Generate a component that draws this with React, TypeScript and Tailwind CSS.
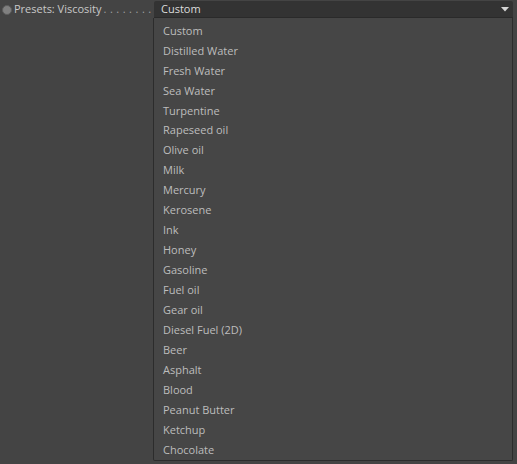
import React from 'react';

const items = [
  'Custom',
  'Distilled Water',
  'Fresh Water',
  'Sea Water',
  'Turpentine',
  'Rapeseed oil',
  'Olive oil',
  'Milk',
  'Mercury',
  'Kerosene',
  'Ink',
  'Honey',
  'Gasoline',
  'Fuel oil',
  'Gear oil',
  'Diesel Fuel (2D)',
  'Beer',
  'Asphalt',
  'Blood',
  'Peanut Butter',
  'Ketchup',
  'Chocolate',
];

const App: React.FC = () => {
  return (
    <div className="w-[517px] h-[464px] bg-[#444444] text-[11px] font-['Open_Sans',sans-serif] overflow-hidden">
      <div className="flex items-start pt-[1px]">
        <div className="flex items-center shrink-0 w-[153px] h-[17px] pl-[2px] text-[#c8c8c8] whitespace-nowrap">
          <span className="w-[10px] h-[10px] rounded-full bg-[#808080] border border-[#5c5c5c] mr-[2px] shrink-0" />
          <span>Presets: Viscosity</span>
          <span className="ml-[2px] tracking-[3.5px] text-[#a0a0a0]">........</span>
        </div>
        <div className="flex flex-col w-[360px] shrink-0">
          <div className="flex items-center justify-between h-[17px] ml-[1px] bg-[#333333] rounded-t-[2px] border-b border-[#2a2a2a] pl-[7px] pr-[4px] text-[#dcdcdc]">
            <span>Custom</span>
            <svg width="8" height="5" viewBox="0 0 8 5">
              <path d="M0 0 L8 0 L4 4.5 Z" fill="#d6d6d6" />
            </svg>
          </div>
          <div className="flex flex-col h-[443px] bg-[#464646] border border-t-0 border-[#2c2c2c] rounded-b-[2px] pt-[3px]">
            {items.map((item) => (
              <div key={item} className="h-[20px] flex items-center pl-[9px] text-[#bdbdbd] whitespace-nowrap">
                {item}
              </div>
            ))}
          </div>
        </div>
      </div>
    </div>
  );
};

export default App;
